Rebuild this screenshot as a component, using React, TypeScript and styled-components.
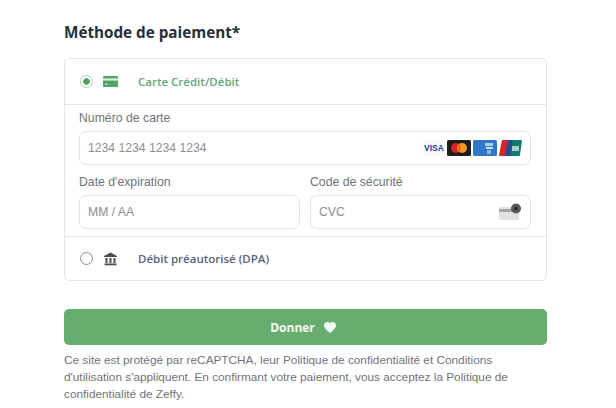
import React from 'react';
import styled, { createGlobalStyle } from 'styled-components';

const GlobalStyle = createGlobalStyle`
  html, body {
    margin: 0;
    padding: 0;
    background: #fff;
    font-family: 'Liberation Sans', Arial, sans-serif;
  }
`;

const Page = styled.div`
  width: 616px;
  height: 408px;
  box-sizing: border-box;
  padding: 23px 69px 0 64px;
  overflow: hidden;
`;

const Title = styled.h2`
  margin: 0 0 16px;
  height: 19px;
  line-height: 19px;
  font-family: 'Open Sans', sans-serif;
  font-size: 15.25px;
  font-weight: 700;
  color: #25303a;
`;

const Card = styled.div`
  box-sizing: border-box;
  height: 223px;
  border: 1px solid #e4e6e8;
  border-radius: 5px;
  display: flex;
  flex-direction: column;
`;

const MethodRow = styled.div<{ $first?: boolean }>`
  flex: ${p => (p.$first ? '0 0 45px' : '1')};
  display: flex;
  align-items: center;
  padding-left: 15px;
`;

const Radio = styled.span<{ $checked?: boolean }>`
  box-sizing: border-box;
  width: 13px;
  height: 13px;
  border-radius: 50%;
  flex: none;
  border: 1.5px solid ${p => (p.$checked ? '#a5d3ae' : '#8a8f94')};
  background: ${p => (p.$checked ? 'radial-gradient(circle, #4fa365 0 3px, #fff 3.5px)' : '#fff')};
`;

const MethodIcon = styled.span`
  width: 15px;
  height: 14px;
  margin-left: 10px;
  display: flex;
  align-items: center;
  justify-content: center;
  flex: none;
`;

const MethodLabel = styled.span<{ $active?: boolean }>`
  margin-left: 20px;
  font-family: 'Open Sans', sans-serif;
  font-size: 11.5px;
  font-weight: 600;
  color: ${p => (p.$active ? '#5fa872' : '#56627a')};
`;

const CardForm = styled.div`
  flex: none;
  height: 133px;
  box-sizing: border-box;
  border-top: 1px solid #e4e6e8;
  border-bottom: 1px solid #e4e6e8;
  padding: 6px 15px 0 14px;
  display: flex;
  flex-direction: column;
`;

const FieldLabel = styled.div`
  height: 14px;
  line-height: 14px;
  font-size: 12.25px;
  color: #6e7378;
  margin-bottom: 6px;
`;

const InputBox = styled.div`
  box-sizing: border-box;
  height: 34px;
  border: 1px solid #e2e4e6;
  border-radius: 7px;
  display: flex;
  align-items: center;
  justify-content: space-between;
  padding: 0 8px;
  font-size: 12.2px;
  color: #8c9094;
`;

const SplitRow = styled.div`
  display: grid;
  grid-template-columns: 1fr 1fr;
  gap: 10px;
  margin-top: 10px;
`;

const Brands = styled.div`
  display: flex;
  align-items: center;
  gap: 2px;
`;

const SubmitButton = styled.button`
  display: flex;
  width: 100%;
  height: 36px;
  margin-top: 28px;
  border: none;
  border-radius: 5px;
  background: #68ad70;
  color: #f4faf3;
  font-family: 'Open Sans', sans-serif;
  font-size: 12px;
  font-weight: 700;
  align-items: center;
  justify-content: center;
  gap: 9px;
  padding: 0 5px 0 0;
`;

const Legal = styled.p`
  margin: 7px 0 0;
  font-size: 11.8px;
  line-height: 17px;
  color: #6f7479;
  width: 470px;
`;

const CardIcon = () => (
  <svg width="15" height="11" viewBox="0 0 15 11">
    <rect width="15" height="11" rx="1" fill="#4fa365" />
    <rect y="2.4" width="15" height="2.2" fill="#dff0e2" />
    <rect x="2" y="7.6" width="2.5" height="1.2" fill="#dff0e2" />
  </svg>
);

const BankIcon = () => (
  <svg width="15" height="14" viewBox="0 0 14 14" fill="#4a4f55">
    <path d="M7 0.5 L13.5 4 V5 H0.5 V4 Z" />
    <rect x="2" y="6" width="2" height="5" />
    <rect x="6" y="6" width="2" height="5" />
    <rect x="10" y="6" width="2" height="5" />
    <rect x="1" y="11.5" width="12" height="1.8" />
  </svg>
);

const VisaLogo = () => (
  <svg width="22" height="16" viewBox="0 0 22 16">
    <rect width="22" height="16" fill="#f7f8fc" />
    <text x="11" y="11" textAnchor="middle" fontFamily="'Liberation Sans', sans-serif" fontSize="8.5" fontWeight="700" fill="#2a3f94">VISA</text>
  </svg>
);

const MastercardLogo = () => (
  <svg width="24" height="16" viewBox="0 0 24 16">
    <rect width="24" height="16" rx="1.5" fill="#1d1d1b" />
    <circle cx="9" cy="8" r="5" fill="#d9222a" />
    <circle cx="15" cy="8" r="5" fill="#f39a1e" />
    <rect x="10.5" y="4.5" width="3" height="7" fill="#f0641f" />
  </svg>
);

const AmexLogo = () => (
  <svg width="24" height="16" viewBox="0 0 24 16">
    <rect width="24" height="16" rx="1.5" fill="#2f78c9" />
    <rect x="12" y="3" width="8" height="3" fill="#a9cbec" />
    <rect x="13" y="7" width="7" height="2" fill="#cfe1f4" />
    <rect x="14" y="10" width="4" height="4" fill="#8db8e6" />
  </svg>
);

const UnionPayLogo = () => (
  <svg width="23" height="16" viewBox="0 0 23 16">
    <path d="M3 0 H11 L8 16 H1 Q0 16 0 15 Z" fill="#d8232f" />
    <path d="M9 0 H16 L13 16 H6 Z" fill="#1f4e8c" />
    <path d="M14 0 H22 Q23 0 23 1 L21 15 Q21 16 20 16 H11 Z" fill="#157a6e" />
    <rect x="13" y="6" width="7" height="5" fill="#cfe3dc" opacity="0.8" />
  </svg>
);

const CvcIcon = () => (
  <svg width="24" height="18" viewBox="0 0 24 18">
    <rect x="1" y="4" width="20" height="13" rx="1" fill="#e2e2e2" />
    <rect x="1" y="6" width="20" height="3" fill="#a2a2a2" />
    <circle cx="18" cy="5.5" r="5" fill="#5a5a5a" />
    <circle cx="18" cy="5.5" r="2" fill="#2e2e2e" />
  </svg>
);

const HeartIcon = () => (
  <svg width="12" height="11" viewBox="0 0 24 22" fill="#f4faf3">
    <path d="M12 22 C5 16 0 12 0 6.5 C0 2.8 2.8 0 6.5 0 C8.6 0 10.7 1 12 2.7 C13.3 1 15.4 0 17.5 0 C21.2 0 24 2.8 24 6.5 C24 12 19 16 12 22 Z" />
  </svg>
);

export default function App() {
  return (
    <Page>
      <GlobalStyle />
      <Title>Méthode de paiement*</Title>
      <Card>
        <MethodRow $first>
          <Radio $checked />
          <MethodIcon><CardIcon /></MethodIcon>
          <MethodLabel $active>Carte Crédit/Débit</MethodLabel>
        </MethodRow>
        <CardForm>
          <FieldLabel>Numéro de carte</FieldLabel>
          <InputBox>
            <span>1234 1234 1234 1234</span>
            <Brands>
              <VisaLogo />
              <MastercardLogo />
              <AmexLogo />
              <UnionPayLogo />
            </Brands>
          </InputBox>
          <SplitRow>
            <div>
              <FieldLabel>Date d'expiration</FieldLabel>
              <InputBox>MM / AA</InputBox>
            </div>
            <div>
              <FieldLabel>Code de sécurité</FieldLabel>
              <InputBox>
                <span>CVC</span>
                <CvcIcon />
              </InputBox>
            </div>
          </SplitRow>
        </CardForm>
        <MethodRow>
          <Radio />
          <MethodIcon><BankIcon /></MethodIcon>
          <MethodLabel>Débit préautorisé (DPA)</MethodLabel>
        </MethodRow>
      </Card>
      <SubmitButton>
        Donner
        <HeartIcon />
      </SubmitButton>
      <Legal>
        Ce site est protégé par reCAPTCHA, leur Politique de confidentialité et Conditions d'utilisation s'appliquent. En confirmant votre paiement, vous acceptez la Politique de confidentialité de Zeffy.
      </Legal>
    </Page>
  );
}
